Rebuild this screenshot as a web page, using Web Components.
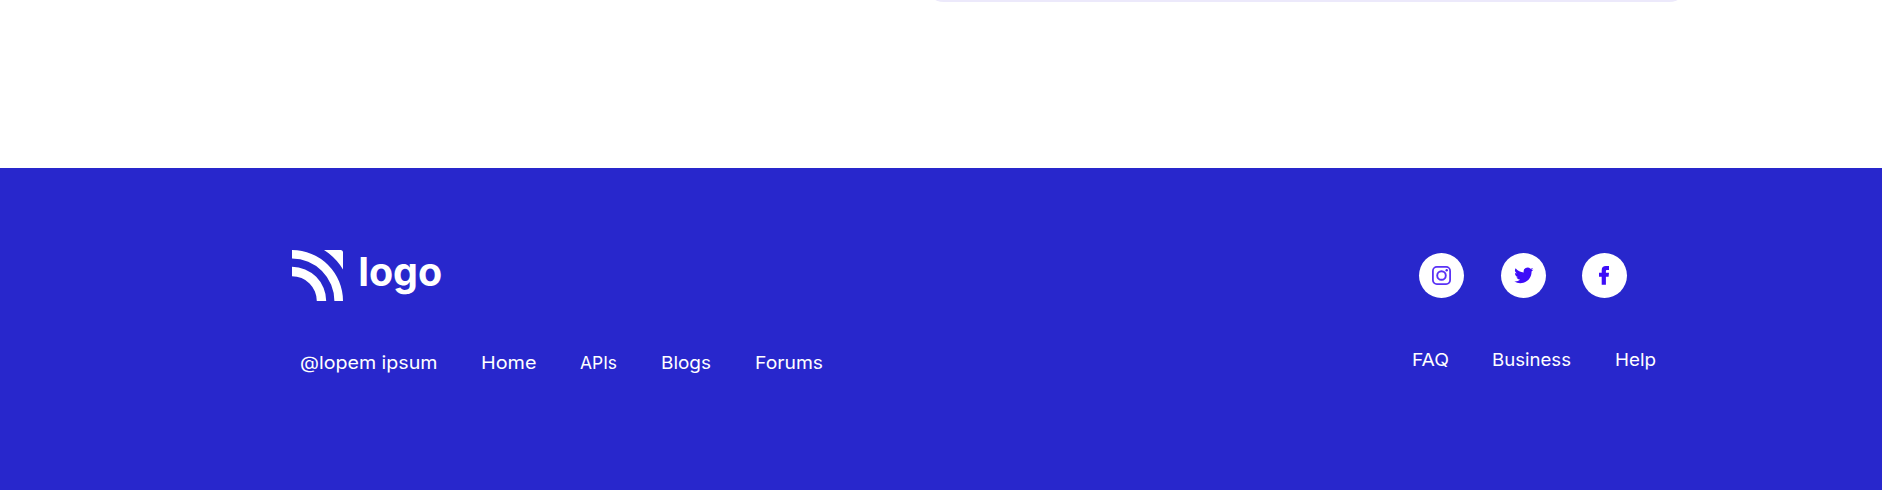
<!DOCTYPE html>
<html lang="en">
<head>
<meta charset="utf-8">
<title>Footer</title>
<style>
body { margin: 0; background: #fff; font-family: Inter, "Open Sans", sans-serif; overflow: hidden; }
</style>
</head>
<body>
<page-shell></page-shell>
<script>
const define = (name, html, setup) => customElements.define(name, class extends HTMLElement {
  constructor() {
    super();
    this.attachShadow({ mode: 'open' }).innerHTML = html;
  }
  connectedCallback() { if (setup) setup(this, this.shadowRoot); }
});

define('card-edge', `<style>
  :host { display: block; height: 168px; box-sizing: border-box; padding-left: 924px; overflow: hidden; }
  div { width: 765px; height: 20px; margin-top: -18px; border-radius: 0 0 20px 20px; border-bottom: 2px solid #ece9fb; box-sizing: border-box; }
</style><div></div>`);

define('brand-logo', `<style>
  :host { display: flex; height: 62px; }
  svg { display: block; fill: #fff; overflow: visible; }
  .word { margin-left: 17px; }
</style>
<svg width="51" height="51" viewBox="0 0 51 51" aria-hidden="true">
  <path d="M0 16.8A34.2 34.2 0 0 1 34.2 51H24.8A24.8 24.8 0 0 0 0 26.2ZM0 0A51 51 0 0 1 51 51H42.4A42.4 42.4 0 0 0 0 8.6ZM32 0H48.5Q51 0 51 2.5V19.4A60 60 0 0 0 32 0Z"/>
</svg>
<svg class="word" width="82" height="51"><text x="-1.8" y="35.7" font-size="39.5" font-weight="700" textLength="84" lengthAdjust="spacingAndGlyphs">logo</text></svg>`);

// width is the drawn length of the label, in pixels
define('nav-link', `<style>
  :host { display: block; height: 27px; color: #fff; }
  svg { display: block; overflow: visible; }
  text { fill: currentColor; font-size: 17.8px; }
</style><svg height="27"><text x="0" y="19" lengthAdjust="spacingAndGlyphs"></text></svg>`, (el, root) => {
  const w = el.getAttribute('width');
  root.querySelector('svg').setAttribute('width', w);
  const t = root.querySelector('text');
  t.setAttribute('textLength', w);
  t.textContent = el.getAttribute('label');
});

define('social-button', `<style>
  :host { display: flex; width: 45px; height: 45px; border-radius: 50%; background: #fff; color: #3d0df8; }
  ::slotted(svg) { display: block; width: 45px; height: 45px; }
</style><slot></slot>`);

define('link-row', `<style>
  :host { display: flex; gap: var(--row-gap, 43px); }
</style><slot></slot>`);

define('site-footer', `<style>
  :host { display: flex; justify-content: space-between; box-sizing: border-box; height: 322px; padding: 82px 226px 0 292px; background: #2827cc; color: #fff; }
  .left link-row { --row-gap: 43.8px; margin: 38px 0 0 7.6px; }
  .right { padding-top: 3px; }
  .social { --row-gap: 36.5px; margin-left: 7.5px; }
  .right .links { --row-gap: 43.7px; margin-top: 49px; }
</style>
<div class="left">
  <brand-logo></brand-logo>
  <link-row>
    <nav-link label="@lopem ipsum" width="137.5"></nav-link>
    <nav-link label="Home" width="55.5"></nav-link>
    <nav-link label="APIs" width="37"></nav-link>
    <nav-link label="Blogs" width="50"></nav-link>
    <nav-link label="Forums" width="68"></nav-link>
  </link-row>
</div>
<div class="right">
  <link-row class="social">
    <social-button><svg viewBox="0 0 45 45" fill="none" stroke="#5a32f6" aria-label="Instagram"><rect x="13.9" y="13.9" width="17.2" height="17.2" rx="4" stroke-width="1.8"/><circle cx="22.5" cy="22.5" r="4.3" stroke-width="1.9"/><circle cx="27.7" cy="17.3" r="1.2" fill="#4d22f5" stroke="none"/></svg></social-button>
    <social-button><svg viewBox="0 0 45 45" fill="#3d0df8" aria-label="Twitter"><path transform="translate(13.3 12.8) scale(.8)" d="M23.95 4.57a10 10 0 0 1-2.82.77 4.96 4.96 0 0 0 2.16-2.72c-.95.55-2 .95-3.13 1.18a4.92 4.92 0 0 0-8.38 4.48A13.9 13.9 0 0 1 1.64 3.16a4.92 4.92 0 0 0 1.52 6.57 4.9 4.9 0 0 1-2.23-.61v.06a4.92 4.92 0 0 0 3.95 4.83 5 5 0 0 1-2.21.08 4.94 4.94 0 0 0 4.6 3.42A9.87 9.87 0 0 1 0 19.54a14 14 0 0 0 7.55 2.21c9.05 0 14-7.5 14-13.98l-.02-.63a9.9 9.9 0 0 0 2.42-2.57Z"/></svg></social-button>
    <social-button><svg viewBox="0 0 45 45" fill="#3d0df8" aria-label="Facebook"><path d="M19.7 31.7V23.8H17V19.7H19.7V17.2C19.7 14.5 21.2 13.1 23.9 13.1H27V17.1H25.2C24.2 17.1 23.9 17.5 23.9 18.3V19.7H27L26.6 23.8H23.9V31.7Z"/></svg></social-button>
  </link-row>
  <link-row class="links">
    <nav-link label="FAQ" width="37"></nav-link>
    <nav-link label="Business" width="79"></nav-link>
    <nav-link label="Help" width="41"></nav-link>
  </link-row>
</div>`);

define('page-shell', `<style>
  :host { display: block; height: 490px; }
</style><card-edge></card-edge><site-footer></site-footer>`);
</script>
</body>
</html>
